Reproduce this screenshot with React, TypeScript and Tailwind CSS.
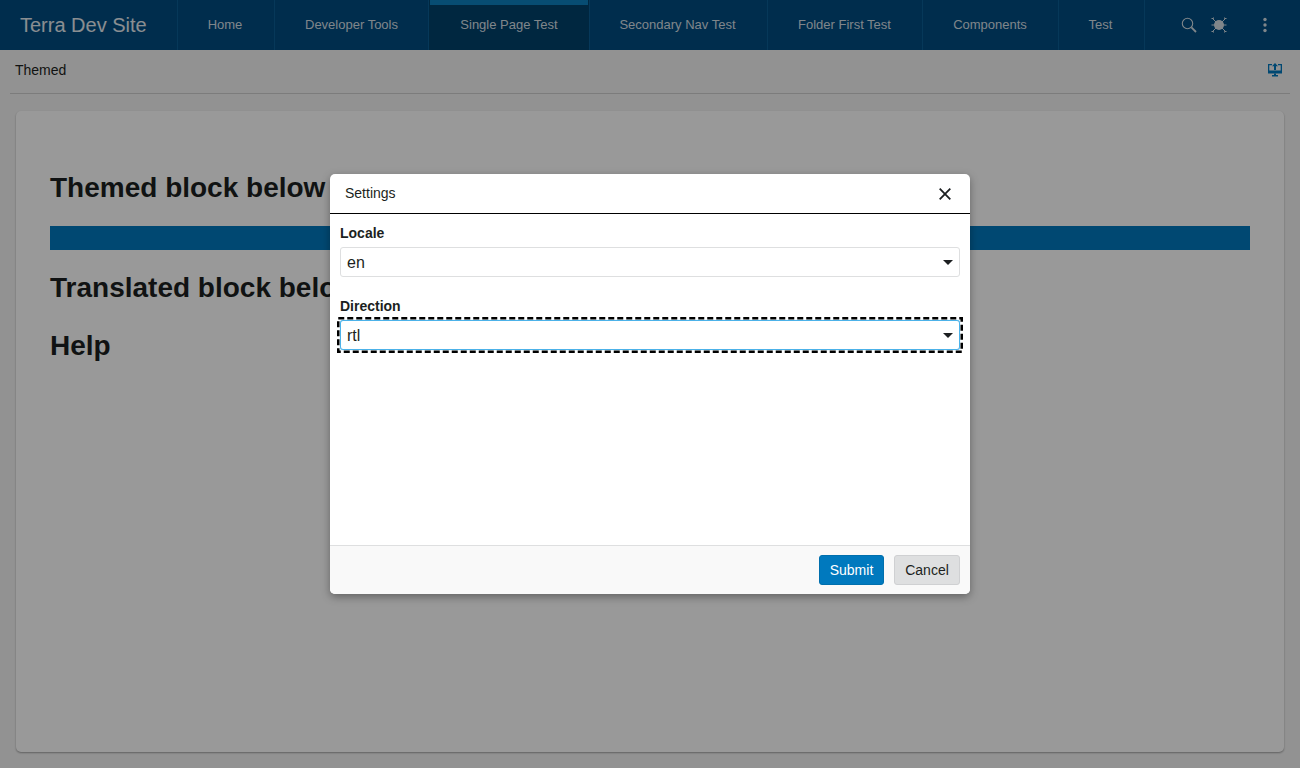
const font = { fontFamily: '"Liberation Sans", Arial, sans-serif' };

const navItems = [
  { label: "Home", className: "w-[97px] pr-[2px]" },
  { label: "Developer Tools", className: "w-[154px]" },
  { label: "Single Page Test", className: "w-[161px]", active: true },
  { label: "Secondary Nav Test", className: "w-[178px] pr-[2px]" },
  { label: "Folder First Test", className: "w-[155px] pr-[1px]" },
  { label: "Components", className: "w-[136px] pr-[1px]" },
  { label: "Test", className: "w-[86px] pr-[2px]" },
];

const SearchIcon = () => (
  <svg viewBox="0 0 16 16" className="size-4 text-[#d5dfe6]" fill="none" stroke="currentColor">
    <circle cx="6.5" cy="6.5" r="5.2" strokeWidth="1.1" />
    <path d="M10.4 10.4 15 15" strokeWidth="1.8" />
  </svg>
);

const BugIcon = () => (
  <svg viewBox="0 0 16 16" className="size-4 text-[#d5dfe6]" fill="currentColor" stroke="currentColor">
    <circle cx="8" cy="8" r="5" stroke="none" />
    <path d="M1.5 1.5 14.5 14.5M14.5 1.5 1.5 14.5M0.5 8h15" strokeWidth="1" />
    <path d="M0.5 1.5h2v-1M13.5 .5v1h2M.5 14.5h2v1M13.5 15.5v-1h2" strokeWidth="1" fill="none" />
  </svg>
);

const KebabIcon = () => (
  <svg viewBox="0 0 16 16" className="size-4 text-[#d5dfe6]" fill="currentColor">
    <circle cx="8" cy="2.5" r="1.7" />
    <circle cx="8" cy="8" r="1.7" />
    <circle cx="8" cy="13.5" r="1.7" />
  </svg>
);

const ThemeIcon = () => (
  <svg viewBox="0 0 14 14" className="size-[14px] text-[#0079be]" fill="currentColor">
    <path d="M0 1h4v1.2H1.3v5.3h11.4V2.2H10V1h4v9.5H0z" />
    <path d="M7 0 10 3.2H8V7H6V3.2H4z" />
    <path d="M6 10.5h2V12h2v1.5H4V12h2z" />
  </svg>
);

const Caret = () => (
  <svg viewBox="0 0 10 5" className="pointer-events-none absolute top-[12px] right-[6px] h-[5px] w-[10px] text-[#1c1f21]" fill="currentColor">
    <path d="M0 0h10L5 5z" />
  </svg>
);

// dashed focus ring, 3px outside the field
const FocusRing = () => (
  <svg className="pointer-events-none absolute -top-[3px] -left-[3px] h-[36px] w-[626px]" fill="none" stroke="black" strokeWidth="2.5" strokeDasharray="6 3">
    <rect x="1.25" y="1.25" width="623.5" height="33.5" />
  </svg>
);

const Field = ({ label, value, focused, className }: { label: string; value: string; focused?: boolean; className?: string }) => (
  <div className={className}>
    <label className="block h-[20px] text-sm leading-[20px] font-bold text-[#1c1f21]">{label}</label>
    <div className="relative mt-[4px]">
      <div
        className={`relative h-[30px] rounded-[3px] border bg-white pl-[6px] text-base leading-[30px] text-[#1c1f21] ${
          focused ? "border-[#4cb2e9] shadow-[0_0_1px_#4cb2e9]" : "border-[#dedfe0]"
        }`}
      >
        {value}
        <Caret />
      </div>
      {focused && <FocusRing />}
    </div>
  </div>
);

export default function App() {
  return (
    <div className="relative h-[768px] w-[1300px] overflow-hidden bg-[#f4f4f4]" style={font}>
      {/* page */}
      <header className="flex h-[50px] bg-[#004c80] text-white">
        <div className="flex w-[177px] items-center pl-[20px] text-xl leading-none text-[#e6edf2]">Terra Dev Site</div>
        <nav className="flex border-l border-[#0a5e94]">
          {navItems.map((item) => (
            <div
              key={item.label}
              className={`relative flex items-center justify-center border-r border-[#0a5e94] text-[13px] text-[#d5dfe6] ${item.className} ${
                item.active ? "bg-[#00416b]" : ""
              }`}
            >
              {item.active && <div className="absolute inset-x-[1px] top-0 h-[5px] bg-[#0d80c0]" />}
              {item.label}
            </div>
          ))}
        </nav>
        <div className="flex items-center">
          <div className="ml-[36px]"><SearchIcon /></div>
          <div className="ml-[14px]"><BugIcon /></div>
          <div className="ml-[30px]"><KebabIcon /></div>
        </div>
      </header>

      <div className="mx-[10px] flex h-[44px] items-center justify-between border-b border-[#cfcfcf] pr-[8px] pb-[4px] pl-[5px] text-sm text-[#1c1f21]">
        <span>Themed</span>
        <ThemeIcon />
      </div>

      <main className="mx-[16px] mt-[17px] h-[641px] rounded-[5px] bg-white px-[34px] pt-[59px] shadow-[0_1px_2px_rgba(0,0,0,0.35)]">
        <h1 className="text-[28px] leading-[36px] font-bold text-[#1c1f21]">Themed block below</h1>
        <div className="mt-[20px] mb-[20px] h-[24px] bg-[#0079be]" />
        <h1 className="text-[28px] leading-[36px] font-bold text-[#1c1f21]">Translated block below</h1>
        <h1 className="mt-[22px] text-[28px] leading-[36px] font-bold text-[#1c1f21]">Help</h1>
      </main>

      {/* overlay */}
      <div className="absolute inset-0 bg-black/40" />

      {/* modal */}
      <div className="absolute top-[174px] left-[330px] flex h-[420px] w-[640px] flex-col rounded-[5px] bg-white shadow-[0_3px_8px_rgba(0,0,0,0.35)]">
        <div className="flex h-[40px] items-center justify-between border-b border-black pr-[19px] pl-[15px] text-sm text-[#1c1f21]">
          <span className="pb-[2px]">Settings</span>
          <svg viewBox="0 0 12 12" className="size-3 text-[#1c1f21]" fill="none" stroke="currentColor" strokeWidth="1.8">
            <path d="M.7.7l10.6 10.6M11.3.7.7 11.3" />
          </svg>
        </div>
        <div className="flex-1 px-[10px] pt-[9px]">
          <Field label="Locale" value="en" />
          <Field label="Direction" value="rtl" focused className="mt-[19px]" />
        </div>
        <div className="flex h-[49px] items-center justify-end gap-[10px] rounded-b-[5px] border-t border-[#dedfe0] bg-[#f9f9f9] pr-[10px]">
          <button className="h-[30px] w-[65px] rounded-[3px] border border-[#006fad] bg-[#0079be] text-sm text-white">Submit</button>
          <button className="h-[30px] w-[66px] rounded-[3px] border border-[#cfd0d2] bg-[#dedfe0] text-sm text-[#1c1f21]">Cancel</button>
        </div>
      </div>
    </div>
  );
}
